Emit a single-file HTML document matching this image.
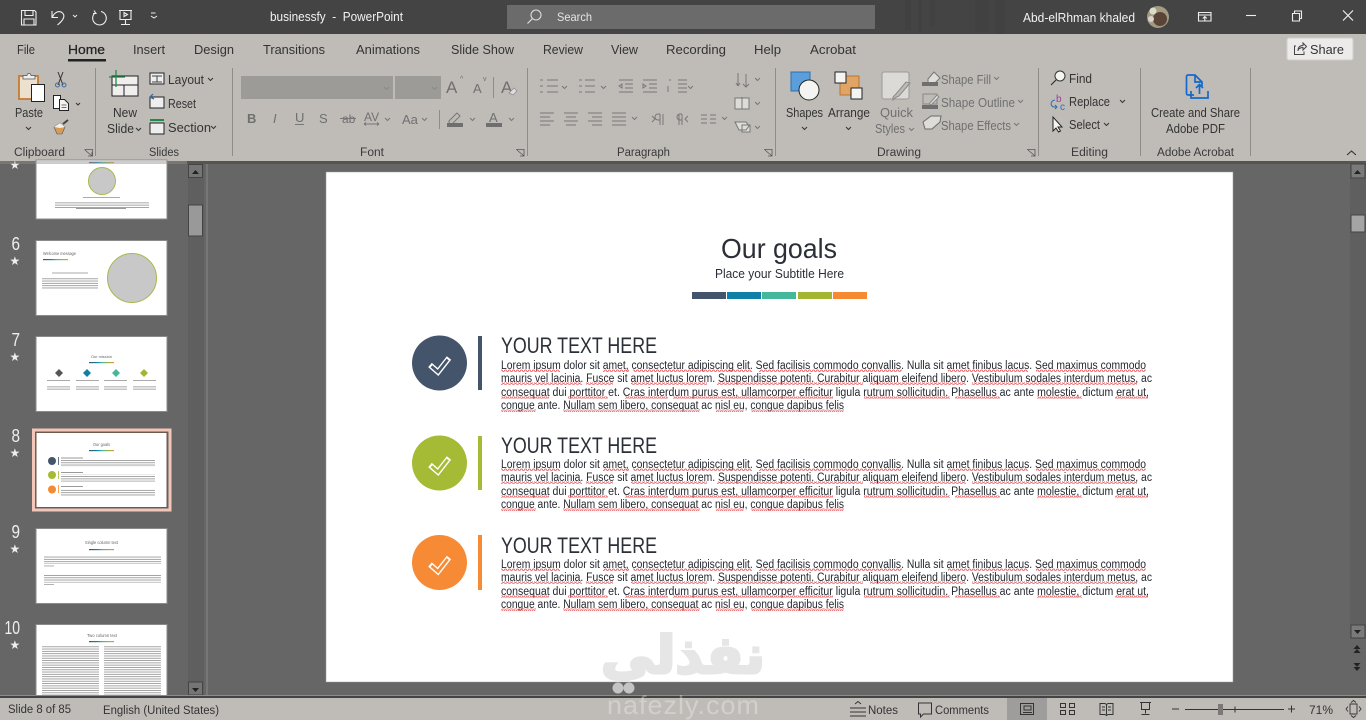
<!DOCTYPE html>
<html><head><meta charset="utf-8"><title>businessfy - PowerPoint</title>
<style>
html,body{margin:0;padding:0;width:1366px;height:720px;overflow:hidden;background:#666}
svg{display:block}
text{font-family:"Liberation Sans",sans-serif}
.t{fill:#333;font-size:12.5px}
.d{fill:#707070;font-size:12.5px}
.g{fill:#3a3a3a;font-size:11.5px}
.w{fill:#f2f2f2;font-size:12.5px}
.b{fill:#23282f;font-size:11.5px}
.h{fill:#2a2f38;font-size:22px}
.ic{fill:none;stroke:#333;stroke-width:1}
.id{fill:none;stroke:#777;stroke-width:1}
.th{fill:#fff;stroke:#8a8a8a;stroke-width:1}
.n{fill:#eee;font-size:18px}
.s{fill:#eee;font-size:12px;font-family:"DejaVu Sans",sans-serif}
</style></head><body>
<svg width="1366" height="720" viewBox="0 0 1366 720" xmlns="http://www.w3.org/2000/svg">
<defs>
<clipPath id="wm"><rect x="590" y="620" width="190" height="61"/></clipPath>
<pattern id="sq" width="4" height="2.4" patternUnits="userSpaceOnUse"><path d="M0 2L1 .5 2 .5 3 2 4 2" fill="none" stroke="#e0484c" stroke-width=".8"/></pattern>
<pattern id="ls" width="4" height="2.300" patternUnits="userSpaceOnUse"><rect width="4" height=".9" fill="#9c9c9c"/></pattern>
<linearGradient id="rb"><stop offset="0" stop-color="#44546a"/><stop offset=".3" stop-color="#0f7fa8"/><stop offset=".55" stop-color="#45b79a"/><stop offset=".8" stop-color="#a2b633"/><stop offset="1" stop-color="#f58a33"/></linearGradient>
<g id="sqg" fill="url(#sq)">
<rect x="501" y="0" width="59" height="2.4"/><rect x="603" y="0" width="26" height="2.4"/><rect x="633" y="0" width="119" height="2.4"/><rect x="759" y="0" width="143" height="2.4"/><rect x="948" y="0" width="80" height="2.4"/><rect x="1036" y="0" width="110" height="2.4"/>
<rect x="501" y="13" width="81" height="2.4"/><rect x="586" y="13" width="27" height="2.4"/><rect x="631" y="13" width="76" height="2.4"/><rect x="717" y="13" width="98" height="2.4"/><rect x="815" y="13" width="48" height="2.4"/><rect x="870" y="13" width="96" height="2.4"/><rect x="972" y="13" width="165" height="2.4"/>
<rect x="501" y="27" width="48" height="2.4"/><rect x="568" y="27" width="40" height="2.4"/><rect x="625" y="27" width="43" height="2.4"/><rect x="673" y="27" width="160" height="2.4"/><rect x="864" y="27" width="86" height="2.4"/><rect x="955" y="27" width="45" height="2.4"/><rect x="1037" y="27" width="45" height="2.4"/><rect x="1115" y="27" width="33" height="2.4"/>
<rect x="501" y="40" width="35" height="2.4"/><rect x="563" y="40" width="90" height="2.4"/><rect x="652" y="40" width="48" height="2.4"/><rect x="716" y="40" width="28" height="2.4"/><rect x="751" y="40" width="93" height="2.4"/>
</g>
</defs>

<!-- title bar -->
<rect width="1366" height="34" fill="#444"/>
<g fill="#414141"><rect x="905" y="0" width="6" height="30"/><rect x="918" y="0" width="4" height="32"/><rect x="930" y="0" width="5" height="26"/><rect x="975" y="0" width="14" height="32"/><rect x="995" y="0" width="10" height="34"/></g>
<g fill="none" stroke="#eee" stroke-width="1.1">
<path d="M21.5 10.5h13l1.500 1.500v13h-14.500zM25 10.500v5h8v-5M24 25v-6h10v6"/>
<path d="M52 11v6.500h6M52.500 17c2-5 7-7 10-4 3 3 1 7-5 12"/>
<path d="M73 15l2 2 2-2" stroke-width=".9"/>
<path d="M101 11.500a6.800 6.800 0 1 1-6 1.500M94 10.500l2 3h-3"/>
<path d="M119 10.500h13M120 10.500v9h11v-9M125.500 19.500v4.500M121 24.500h9M124 12.500l3.500 2-3.500 2z"/>
<path d="M151 13h4.500M151 16l3 2 3-2" stroke-width="1"/>
</g>
<text x="270" y="21" class="w" textLength="133" lengthAdjust="spacingAndGlyphs" xml:space="preserve">businessfy  -  PowerPoint</text>
<rect x="507" y="5" width="368" height="24" fill="#6b6b6b"/>
<circle cx="536" cy="15" r="5" fill="none" stroke="#ddd" stroke-width="1.1"/><path d="M532 19l-4.500 4.500" stroke="#ddd" stroke-width="1.200"/>
<text x="557" y="21" fill="#e5e5e5" font-size="12" textLength="35" lengthAdjust="spacingAndGlyphs">Search</text>
<text x="1023" y="22" class="w" textLength="112" lengthAdjust="spacingAndGlyphs">Abd-elRhman khaled</text>
<circle cx="1158" cy="17" r="11" fill="#a29a82"/><circle cx="1160" cy="19" r="7" fill="#5a4436"/><circle cx="1153" cy="11" r="3.500" fill="#d9dcc8"/><circle cx="1151" cy="19" r="3" fill="#d8d4cc"/>
<g fill="none" stroke="#eee" stroke-width="1.100">
<path d="M1198.500 12.500h12.500v8.500h-12.500zM1198.500 15h12.500M1204.800 21v-4.500M1202.800 18.500l2-2 2 2"/>
<path d="M1246 15.500h10"/>
<path d="M1292.500 13.500h7v7.500h-7zM1294.500 13v-2h7v7.500h-2"/>
<path d="M1343 10.500l10 10M1353 10.500l-10 10" stroke-width="1.200"/>
</g>

<!-- ribbon -->
<rect y="34" width="1366" height="127" fill="#bfbcb8"/>
<rect y="161" width="1366" height="3" fill="#555"/>
<g>
<text x="17" y="54" class="t" textLength="18" lengthAdjust="spacingAndGlyphs">File</text>
<text x="68" y="54" class="t" textLength="37" lengthAdjust="spacingAndGlyphs" style="fill:#222;stroke:#222;stroke-width:.25">Home</text>
<text x="133" y="54" class="t" textLength="32" lengthAdjust="spacingAndGlyphs">Insert</text>
<text x="194" y="54" class="t" textLength="40" lengthAdjust="spacingAndGlyphs">Design</text>
<text x="263" y="54" class="t" textLength="62" lengthAdjust="spacingAndGlyphs">Transitions</text>
<text x="356" y="54" class="t" textLength="64" lengthAdjust="spacingAndGlyphs">Animations</text>
<text x="451" y="54" class="t" textLength="63" lengthAdjust="spacingAndGlyphs">Slide Show</text>
<text x="543" y="54" class="t" textLength="40" lengthAdjust="spacingAndGlyphs">Review</text>
<text x="611" y="54" class="t" textLength="27" lengthAdjust="spacingAndGlyphs">View</text>
<text x="666" y="54" class="t" textLength="60" lengthAdjust="spacingAndGlyphs">Recording</text>
<text x="754" y="54" class="t" textLength="27" lengthAdjust="spacingAndGlyphs">Help</text>
<text x="810" y="54" class="t" textLength="46" lengthAdjust="spacingAndGlyphs">Acrobat</text>
</g>
<rect x="68" y="59" width="38" height="2.500" fill="#222"/>
<rect x="1287" y="38" width="66" height="22" rx="2" fill="#ecebea" stroke="#d0cecb"/>
<path d="M1296 46h-1.500v8.500h9.500v-3M1298 51c0-4 2-5.500 5-5.500v-2.500l3.500 3.500-3.500 3.500v-2.500c-2 0-3.500 .5-5 2.500z" fill="none" stroke="#444"/>
<text x="1310" y="54" class="t" textLength="34" lengthAdjust="spacingAndGlyphs">Share</text>
<path d="M1347 155l4.500-4 4.500 4" fill="none" stroke="#333" stroke-width="1.100"/>

<!-- separators -->
<g fill="#8e8c89"><rect x="95" y="68" width="1" height="88"/><rect x="232" y="68" width="1" height="88"/><rect x="527" y="68" width="1" height="88"/><rect x="775" y="68" width="1" height="88"/><rect x="1038" y="68" width="1" height="88"/><rect x="1140" y="68" width="1" height="88"/><rect x="1250" y="68" width="1" height="88"/></g>

<!-- clipboard -->
<rect x="19" y="76" width="19" height="23" fill="#ece0cf" stroke="#c67b32" stroke-width="1.800"/><path d="M23 79v-3.500h4a2 2 0 0 1 4 0h4v3.500z" fill="#eee" stroke="#555" stroke-width=".8"/>
<rect x="31.500" y="84.500" width="13" height="17" fill="#fff" stroke="#222"/>
<text x="15" y="117" class="t" textLength="28" lengthAdjust="spacingAndGlyphs">Paste</text>
<path d="M26 127l2.500 2.500 2.500-2.500" class="ic"/>
<path d="M58 72l5 13M63 72l-5 13" fill="none" stroke="#333"/><circle cx="57.500" cy="85" r="2" fill="none" stroke="#3a6ea8"/><circle cx="64" cy="85" r="2" fill="none" stroke="#3a6ea8"/>
<rect x="53.500" y="95.500" width="7" height="13" fill="#fff" stroke="#222"/><path d="M59.500 99.500h5l4 4v7h-9z" fill="#f4f3f1" stroke="#222"/><path d="M61.500 105h5M61.500 107.500h5" stroke="#444" stroke-width=".7"/><path d="M76 103l2 2 2-2" class="ic"/>
<path d="M54 127l6-4 5 4-3 7h-5z" fill="#d99a55" stroke="#555" stroke-width=".6"/><path d="M54 127l6-4 5 4-5 1z" fill="#f2f0ec"/><path d="M63 124l5-4" stroke="#444" stroke-width="2"/>
<text x="14" y="156" class="g" textLength="51" lengthAdjust="spacingAndGlyphs">Clipboard</text>
<path d="M84.500 149.500h8v7M85 150l7 6M92 152v4h-4" fill="none" stroke="#555" stroke-width=".8"/>

<!-- slides -->
<rect x="112" y="76" width="26" height="20" fill="#f0efed" stroke="#222"/><path d="M112 85h26M124 85v11" stroke="#222"/>
<path d="M116 70v17M109 77h16" stroke="#1f8a4c" stroke-width="1.300"/>
<text x="113" y="117" class="t" textLength="24" lengthAdjust="spacingAndGlyphs">New</text>
<text x="107" y="133" class="t" textLength="27" lengthAdjust="spacingAndGlyphs">Slide</text>
<path d="M136 128l2.500 2.500 2.500-2.500" class="ic"/>
<rect x="150" y="73" width="14" height="11" fill="#eee" stroke="#222"/><path d="M152 76h10M157 76v6M152 82h10" stroke="#444" fill="none"/>
<text x="168" y="84" class="t" textLength="36" lengthAdjust="spacingAndGlyphs">Layout</text><path d="M208 78l2.500 2.500 2.500-2.500" class="ic"/>
<rect x="150" y="97" width="14" height="11" fill="#eee" stroke="#222"/><path d="M150 97l3-3M150 97l4 2" stroke="#3a6ea8" stroke-width="1.300"/>
<text x="168" y="108" class="t" textLength="28" lengthAdjust="spacingAndGlyphs">Reset</text>
<rect x="150" y="119" width="14" height="2" fill="#1f8a4c"/><rect x="150" y="123" width="14" height="11" fill="#eee" stroke="#222"/>
<text x="168" y="132" class="t" textLength="43" lengthAdjust="spacingAndGlyphs">Section</text><path d="M211 126l2.500 2.500 2.500-2.500" class="ic"/>
<text x="149" y="156" class="g" textLength="30" lengthAdjust="spacingAndGlyphs">Slides</text>

<!-- font -->
<rect x="241" y="76" width="152" height="23" fill="#9d9b98"/><rect x="395" y="76" width="46" height="23" fill="#9d9b98"/>
<path d="M384 87l2.500 2.500 2.500-2.500M432 87l2.500 2.500 2.500-2.500" fill="none" stroke="#8b8987"/>
<text x="446" y="93" class="d" style="font-size:17px">A</text><text x="460" y="81" class="d" style="font-size:7px">^</text>
<text x="473" y="93" class="d" style="font-size:13px">A</text><text x="483" y="81" class="d" style="font-size:7px">v</text>
<rect x="493" y="77" width="1" height="21" fill="#8e8c89"/>
<text x="501" y="93" class="d" style="font-size:17px">A</text><path d="M509 93l5-5 3 3-4 4z" fill="#ddd" stroke="#888" stroke-width=".7"/>
<text x="247" y="123" class="d" style="font-weight:700;font-size:13px">B</text>
<text x="273" y="123" class="d" style="font-style:italic;font-size:13px">I</text>
<text x="295" y="122" class="d" style="font-size:13px">U</text><rect x="295" y="124" width="9" height="1" fill="#777"/>
<text x="319" y="123" class="d" style="font-size:13px">S</text>
<text x="342" y="123" class="d" style="font-size:12px">ab</text><rect x="340" y="118" width="16" height="1" fill="#777"/>
<text x="364" y="121" class="d" style="font-size:12px">AV</text><path d="M364 124h15M364 124l2-1.500M364 124l2 1.500M379 124l-2-1.500M379 124l-2 1.500" class="id"/><path d="M385 118l2.500 2.500 2.500-2.500" class="id"/>
<text x="402" y="124" class="d" style="font-size:13px">Aa</text><path d="M422 118l2.500 2.500 2.500-2.500" class="id"/>
<rect x="439" y="110" width="1" height="19" fill="#8e8c89"/>
<path d="M449 121l8-8 3 3-8 8h-3z" class="id"/><rect x="447" y="123" width="16" height="4" fill="#6f6f6f"/><path d="M470 118l2.500 2.500 2.500-2.500" class="id"/>
<text x="489" y="122" class="d" style="font-size:13px">A</text><rect x="486" y="123" width="16" height="4" fill="#6f6f6f"/><path d="M509 118l2.500 2.500 2.500-2.500" class="id"/>
<text x="360" y="156" class="g" textLength="24" lengthAdjust="spacingAndGlyphs">Font</text>
<path d="M516 149.500h8v7M517 150l7 6M524 152v4h-4" fill="none" stroke="#555" stroke-width=".8"/>

<!-- paragraph -->
<g class="id">
<path d="M547 80h11M547 86h11M547 92h11M540 80h3M540 86h3M540 92h3"/><path d="M562 86l2.500 2.500 2.500-2.500"/>
<path d="M585 80h10M585 86h10M585 92h10M579 80h3M579 86h3M579 92h3"/><path d="M601 86l2.500 2.500 2.500-2.500"/>
<path d="M619 80h14M625 84h8M625 88h8M619 92h14M619 86l3-2v4z"/>
<path d="M643 80h14M649 84h8M649 88h8M643 92h14M646 86l-3-2v4z"/>
<path d="M669 80h2M668 86v6M678 80h9M678 84h9M678 88h9M678 92h9"/><path d="M688 86l2.500 2.500 2.500-2.500"/>
<path d="M738 73v13M738 86l-2-3M738 86l2-3M746 87h0M746 74v13M743 84l3 3 3-3"/><path d="M755 78l2.500 2.500 2.500-2.500"/>
<rect x="735" y="98" width="14" height="11" fill="#dedcd9"/><path d="M742 97v12"/><path d="M755 102l2.500 2.500 2.500-2.500"/>
<path d="M735 122h11l3 4-3 4h-7zM742 125h8v7h-8z" fill="#dedcd9"/><path d="M755 126l2.500 2.500 2.500-2.500"/>
<path d="M540 113h14M540 117h10M540 121h14M540 125h10"/>
<path d="M564 113h14M566 117h10M564 121h14M566 125h10"/>
<path d="M588 113h14M592 117h10M588 121h14M592 125h10"/>
<path d="M612 113h14M612 117h14M612 121h14M612 125h14"/><path d="M632 117l2.500 2.500 2.500-2.500"/>
<path d="M652 116l3 3-3 3M663 114v11M660 114v11M660 114h-2a2.500 2.500 0 0 0 0 6h2"/>
<path d="M679 114v11M682 114v11M682 114h-2a2.500 2.500 0 0 0 0 6h2M688 116l-3 3 3 3"/>
<path d="M701 115h6M701 119h6M701 123h6M710 115h6M710 119h6M710 123h6"/><path d="M722 117l2.500 2.500 2.500-2.500"/>
</g>
<text x="617" y="156" class="g" textLength="53" lengthAdjust="spacingAndGlyphs">Paragraph</text>
<path d="M764 149.500h8v7M765 150l7 6M772 152v4h-4" fill="none" stroke="#555" stroke-width=".8"/>

<!-- drawing -->
<rect x="791" y="72" width="19" height="19" fill="#5a9fdc" stroke="#2e6fae"/><circle cx="809" cy="90" r="10" fill="#f4f4f2" stroke="#222"/>
<text x="786" y="117" class="t" textLength="37" lengthAdjust="spacingAndGlyphs">Shapes</text><path d="M802 127l2.500 2.500 2.500-2.500" class="ic"/>
<rect x="840" y="76" width="19" height="19" fill="#e0a565" stroke="#b9752f"/><rect x="835" y="72" width="11" height="11" fill="#f4f4f2" stroke="#222"/><rect x="851" y="88" width="11" height="11" fill="#f4f4f2" stroke="#222"/>
<text x="828" y="117" class="t" textLength="42" lengthAdjust="spacingAndGlyphs">Arrange</text><path d="M846 127l2.500 2.500 2.500-2.500" class="ic"/>
<rect x="882" y="72" width="27" height="27" rx="2" fill="#dcdad7" stroke="#9b9997"/><path d="M893 100c2-3 4-3 6-4l11-13-4-1-10 12c-2 2-4 3-3 6z" fill="#bdbbb7" stroke="#8c8a88"/>
<text x="880" y="117" class="d" textLength="33" lengthAdjust="spacingAndGlyphs">Quick</text>
<text x="875" y="133" class="d" textLength="30" lengthAdjust="spacingAndGlyphs">Styles</text><path d="M909 128l2.500 2.500 2.500-2.500" class="id"/>
<path d="M928 79l6-7 6 6-5 5h-7z" fill="#e0deda" stroke="#777"/><rect x="922" y="82" width="16" height="4" fill="#6f6f6f"/>
<text x="941" y="84" class="d" textLength="50" lengthAdjust="spacingAndGlyphs">Shape Fill</text><path d="M994 77l2.500 2.500 2.500-2.500" class="id"/>
<rect x="923" y="94" width="14" height="10" fill="none" stroke="#888"/><path d="M929 104l8-9 2 2-8 8z" fill="#ddd" stroke="#888"/><rect x="922" y="105" width="16" height="4" fill="#6f6f6f"/>
<text x="941" y="107" class="d" textLength="74" lengthAdjust="spacingAndGlyphs">Shape Outline</text><path d="M1018 100l2.500 2.500 2.500-2.500" class="id"/>
<path d="M923 122l8-6h10l-1 6-8 7h-7z" fill="#dedcd9" stroke="#6a6a6a"/>
<text x="941" y="130" class="d" textLength="70" lengthAdjust="spacingAndGlyphs">Shape Effects</text><path d="M1014 123l2.500 2.500 2.500-2.500" class="id"/>
<text x="877" y="156" class="g" textLength="44" lengthAdjust="spacingAndGlyphs">Drawing</text>
<path d="M1027 149.500h8v7M1028 150l7 6M1035 152v4h-4" fill="none" stroke="#555" stroke-width=".8"/>

<!-- editing -->
<circle cx="1060" cy="76" r="5" fill="#f4f4f2" stroke="#333"/><path d="M1056 80l-5 5" stroke="#333" stroke-width="1.200"/>
<text x="1069" y="83" class="t" textLength="23" lengthAdjust="spacingAndGlyphs">Find</text>
<text x="1056" y="102" fill="#a03ca0" style="font-size:10px">b</text><text x="1060" y="110" fill="#2f6fb0" style="font-size:10px">c</text><path d="M1055 100c-5 1-5 6-1 7l3 0M1055 105l2 2-2 2" fill="none" stroke="#2f6fb0"/>
<text x="1069" y="106" class="t" textLength="41" lengthAdjust="spacingAndGlyphs">Replace</text><path d="M1120 100l2.500 2.500 2.500-2.500" class="ic"/>
<path d="M1053 117v14l3-3 2.500 4 2-1-2.500-4h4z" fill="#f4f4f2" stroke="#222"/>
<text x="1069" y="129" class="t" textLength="31" lengthAdjust="spacingAndGlyphs">Select</text><path d="M1104 123l2.500 2.500 2.500-2.500" class="ic"/>
<text x="1071" y="156" class="g" textLength="37" lengthAdjust="spacingAndGlyphs">Editing</text>

<!-- acrobat -->
<path d="M1194 95h-6a1.500 1.500 0 0 1-1.500-1.500v-17a1.500 1.500 0 0 1 1.500-1.500h7l7 7v4M1195 75v7h7M1191 91v7h17v-7M1199.500 94v-9M1196 88l3.500-3.500 3.500 3.500" fill="none" stroke="#1669c8" stroke-width="1.700"/>
<text x="1151" y="117" class="t" textLength="89" lengthAdjust="spacingAndGlyphs">Create and Share</text>
<text x="1166" y="133" class="t" textLength="59" lengthAdjust="spacingAndGlyphs">Adobe PDF</text>
<text x="1157" y="156" class="g" textLength="77" lengthAdjust="spacingAndGlyphs">Adobe Acrobat</text>

<!-- panels -->
<rect y="164" width="1366" height="532" fill="#666"/>
<rect x="188" y="164" width="16" height="532" fill="#5f5f5f"/>
<rect x="206" y="164" width="2" height="532" fill="#777"/>
<rect x="188.500" y="164.500" width="14" height="13" fill="#757575" stroke="#444"/><path d="M192 174l3.500-4 3.500 4z" fill="#222"/>
<rect x="188.500" y="205" width="14" height="31" fill="#999" stroke="#444"/>
<rect x="188.500" y="682" width="14" height="13" fill="#757575" stroke="#444"/><path d="M192 688l3.500 4 3.500-4z" fill="#222"/>

<!-- thumb 5 -->
<rect x="36" y="160" width="131" height="59" class="th"/>
<rect x="89" y="162" width="25" height="1.200" fill="url(#rb)"/>
<circle cx="102" cy="181" r="13.500" fill="#c8c8c8" stroke="#a8b84a"/>
<rect x="83" y="197" width="37" height="1" fill="#aaa"/>
<rect x="55" y="201.500" width="94" height="7" fill="url(#ls)"/><rect x="76" y="208" width="50" height="1" fill="#9c9c9c"/>
<!-- 6 -->
<rect x="36" y="240.500" width="131" height="75" class="th"/>
<text x="43" y="255" fill="#666" style="font-size:4.500px" textLength="33" lengthAdjust="spacingAndGlyphs">Welcome message</text>
<rect x="43" y="259" width="25" height="1.200" fill="url(#rb)"/>
<circle cx="132" cy="278" r="24.500" fill="#c8c8c8" stroke="#a8b84a"/>
<rect x="52" y="272.500" width="36" height="1" fill="#aaa"/>
<rect x="42" y="277" width="56" height="12" fill="url(#ls)"/>
<!-- 7 -->
<rect x="36" y="336.500" width="131" height="75" class="th"/>
<text x="91" y="358" fill="#666" style="font-size:4px" textLength="21" lengthAdjust="spacingAndGlyphs">Our mission</text>
<rect x="89" y="362" width="25" height="1.200" fill="url(#rb)"/>
<g transform="translate(0 373)"><path d="M59 -4l4 4-4 4-4-4z" fill="#555"/><path d="M87 -4l4 4-4 4-4-4z" fill="#0f7fa8"/><path d="M116 -4l4 4-4 4-4-4z" fill="#45b79a"/><path d="M144 -4l4 4-4 4-4-4z" fill="#a2b633"/></g>
<g fill="#aaa"><rect x="47" y="380" width="23" height="1"/><rect x="76" y="380" width="23" height="1"/><rect x="104" y="380" width="23" height="1"/><rect x="133" y="380" width="23" height="1"/></g>
<g fill="url(#ls)"><rect x="47" y="385" width="23" height="6"/><rect x="76" y="385" width="23" height="6"/><rect x="104" y="385" width="23" height="6"/><rect x="133" y="385" width="23" height="6"/></g>
<!-- 8 -->
<rect x="33.500" y="430" width="136.500" height="80" fill="none" stroke="#f3c6b8" stroke-width="3"/>
<rect x="36" y="432.500" width="131" height="75" fill="#fff" stroke="#6d5a4c"/>
<text x="93" y="446" fill="#666" style="font-size:4.500px" textLength="17" lengthAdjust="spacingAndGlyphs">Our goals</text>
<rect x="89" y="450" width="25" height="1.200" fill="url(#rb)"/>
<circle cx="52" cy="461" r="4" fill="#44546a"/><circle cx="52" cy="475" r="4" fill="#a5bb35"/><circle cx="52" cy="489.500" r="4" fill="#f58a34"/>
<rect x="58" y="457" width=".8" height="8" fill="#44546a"/><rect x="58" y="471" width=".8" height="8" fill="#a5bb35"/><rect x="58" y="485" width=".8" height="8" fill="#f58a34"/>
<g fill="#999"><rect x="61" y="457.500" width="22" height="1"/><rect x="61" y="472" width="22" height="1"/><rect x="61" y="486" width="22" height="1"/></g>
<g fill="url(#ls)"><rect x="61" y="460" width="94" height="7"/><rect x="61" y="474.500" width="94" height="7"/><rect x="61" y="488.500" width="94" height="7"/></g>
<!-- 9 -->
<rect x="36" y="528.500" width="131" height="75" class="th"/>
<text x="85" y="544" fill="#666" style="font-size:4.500px" textLength="33" lengthAdjust="spacingAndGlyphs">Single column text</text>
<rect x="89" y="549" width="25" height="1.200" fill="url(#rb)"/>
<g fill="url(#ls)"><rect x="44" y="555.500" width="117" height="8.500"/><rect x="44" y="574" width="117" height="8.500"/></g>
<g fill="#aaa"><rect x="44" y="565.500" width="10" height=".9"/><rect x="44" y="584" width="10" height=".9"/></g>
<!-- 10 -->
<rect x="36" y="624.500" width="131" height="74" class="th"/>
<text x="87" y="637" fill="#666" style="font-size:4.500px" textLength="30" lengthAdjust="spacingAndGlyphs">Two column text</text>
<rect x="89" y="641" width="25" height="1.200" fill="url(#rb)"/>
<rect x="42" y="645" width="57" height="50" fill="url(#ls)"/><rect x="104" y="645" width="57" height="50" fill="url(#ls)"/>
<!-- numbers -->
<text x="11.500" y="250" class="n" textLength="8.500" lengthAdjust="spacingAndGlyphs">6</text><text x="11.500" y="346" class="n" textLength="8.500" lengthAdjust="spacingAndGlyphs">7</text><text x="11.500" y="442" class="n" textLength="8.500" lengthAdjust="spacingAndGlyphs">8</text><text x="11.500" y="538" class="n" textLength="8.500" lengthAdjust="spacingAndGlyphs">9</text><text x="4.500" y="634" class="n" textLength="15.500" lengthAdjust="spacingAndGlyphs">10</text>
<text x="9.500" y="169" class="s">★</text><text x="9.500" y="265" class="s">★</text><text x="9.500" y="361" class="s">★</text><text x="9.500" y="457" class="s">★</text><text x="9.500" y="553" class="s">★</text><text x="9.500" y="649" class="s">★</text>
<rect y="161" width="187" height="3" fill="#9c9a98" opacity=".5"/>

<!-- right scrollbar -->
<rect x="1350" y="164" width="16" height="532" fill="#5f5f5f"/>
<rect x="1351" y="164" width="14" height="14" fill="#7a7a7a" stroke="#444"/><path d="M1354 174l3.500-4 3.500 4z" fill="#222"/>
<rect x="1351" y="215" width="14" height="17" fill="#a5a5a5" stroke="#444"/>
<rect x="1351" y="625" width="14" height="13" fill="#7a7a7a" stroke="#444"/><path d="M1354 630l3.500 4 3.500-4z" fill="#222"/>
<rect x="1350" y="639" width="16" height="57" fill="#666"/>
<path d="M1353.500 649l3.500-4 3.500 4zM1353.500 653l3.500-4 3.500 4zM1353.500 663l3.500 4 3.500-4zM1353.500 667l3.500 4 3.500-4z" fill="#222"/>

<!-- slide -->
<rect x="326" y="172" width="907" height="510" fill="#fff" stroke="#999" stroke-width=".5"/>
<text x="721" y="258" fill="#2a2f38" style="font-size:28px" textLength="116" lengthAdjust="spacingAndGlyphs">Our goals</text>
<text x="715" y="278" fill="#2a2f38" style="font-size:13px" textLength="129" lengthAdjust="spacingAndGlyphs">Place your Subtitle Here</text>
<rect x="692" y="292" width="34" height="7" fill="#44546a"/><rect x="727" y="292" width="34" height="7" fill="#0f7fa8"/><rect x="762" y="292" width="34" height="7" fill="#45b79a"/><rect x="798" y="292" width="34" height="7" fill="#a2b633"/><rect x="833" y="292" width="34" height="7" fill="#f58a33"/>

<circle cx="439.500" cy="363" r="27.500" fill="#44546a"/><rect x="478" y="336" width="4" height="54" fill="#44546a"/>
<path d="M430 365l8 7 11-14" fill="none" stroke="#fff" stroke-width="5.500"/><path d="M431.500 366.300l6.500 5.700 9.700-12.500" fill="none" stroke="#44546a" stroke-width="2.800"/>
<circle cx="439.500" cy="463" r="27.500" fill="#a5bb35"/><rect x="478" y="436" width="4" height="54" fill="#a5bb35"/>
<path d="M430 465l8 7 11-14" fill="none" stroke="#fff" stroke-width="5.500"/><path d="M431.500 466.300l6.500 5.700 9.700-12.500" fill="none" stroke="#a5bb35" stroke-width="2.800"/>
<circle cx="439.500" cy="562.500" r="27.500" fill="#f78a35"/><rect x="478" y="535" width="4" height="55" fill="#f78a35"/>
<path d="M430 564.500l8 7 11-14" fill="none" stroke="#fff" stroke-width="5.500"/><path d="M431.500 565.800l6.500 5.700 9.700-12.500" fill="none" stroke="#f78a35" stroke-width="2.800"/>

<text x="501" y="353" class="h" textLength="156" lengthAdjust="spacingAndGlyphs">YOUR TEXT HERE</text>
<text x="501" y="369" class="b" textLength="645" lengthAdjust="spacingAndGlyphs">Lorem ipsum dolor sit amet, consectetur adipiscing elit. Sed facilisis commodo convallis. Nulla sit amet finibus lacus. Sed maximus commodo</text>
<text x="501" y="382" class="b" textLength="651" lengthAdjust="spacingAndGlyphs">mauris vel lacinia. Fusce sit amet luctus lorem. Suspendisse potenti. Curabitur aliquam eleifend libero. Vestibulum sodales interdum metus, ac</text>
<text x="501" y="396" class="b" textLength="648" lengthAdjust="spacingAndGlyphs">consequat dui porttitor et. Cras interdum purus est, ullamcorper efficitur ligula rutrum sollicitudin. Phasellus ac ante molestie, dictum erat ut,</text>
<text x="501" y="409" class="b" textLength="343" lengthAdjust="spacingAndGlyphs">congue ante. Nullam sem libero, consequat ac nisl eu, congue dapibus felis</text>
<use href="#sqg" y="369.500"/>

<text x="501" y="453" class="h" textLength="156" lengthAdjust="spacingAndGlyphs">YOUR TEXT HERE</text>
<text x="501" y="468" class="b" textLength="645" lengthAdjust="spacingAndGlyphs">Lorem ipsum dolor sit amet, consectetur adipiscing elit. Sed facilisis commodo convallis. Nulla sit amet finibus lacus. Sed maximus commodo</text>
<text x="501" y="481" class="b" textLength="651" lengthAdjust="spacingAndGlyphs">mauris vel lacinia. Fusce sit amet luctus lorem. Suspendisse potenti. Curabitur aliquam eleifend libero. Vestibulum sodales interdum metus, ac</text>
<text x="501" y="495" class="b" textLength="648" lengthAdjust="spacingAndGlyphs">consequat dui porttitor et. Cras interdum purus est, ullamcorper efficitur ligula rutrum sollicitudin. Phasellus ac ante molestie, dictum erat ut,</text>
<text x="501" y="508" class="b" textLength="343" lengthAdjust="spacingAndGlyphs">congue ante. Nullam sem libero, consequat ac nisl eu, congue dapibus felis</text>
<use href="#sqg" y="468.500"/>

<text x="501" y="553" class="h" textLength="156" lengthAdjust="spacingAndGlyphs">YOUR TEXT HERE</text>
<text x="501" y="568" class="b" textLength="645" lengthAdjust="spacingAndGlyphs">Lorem ipsum dolor sit amet, consectetur adipiscing elit. Sed facilisis commodo convallis. Nulla sit amet finibus lacus. Sed maximus commodo</text>
<text x="501" y="581" class="b" textLength="651" lengthAdjust="spacingAndGlyphs">mauris vel lacinia. Fusce sit amet luctus lorem. Suspendisse potenti. Curabitur aliquam eleifend libero. Vestibulum sodales interdum metus, ac</text>
<text x="501" y="595" class="b" textLength="648" lengthAdjust="spacingAndGlyphs">consequat dui porttitor et. Cras interdum purus est, ullamcorper efficitur ligula rutrum sollicitudin. Phasellus ac ante molestie, dictum erat ut,</text>
<text x="501" y="608" class="b" textLength="343" lengthAdjust="spacingAndGlyphs">congue ante. Nullam sem libero, consequat ac nisl eu, congue dapibus felis</text>
<use href="#sqg" y="568.500"/>

<!-- status bar -->
<rect y="695" width="1366" height="1" fill="#8c8c8c"/><rect y="696" width="1366" height="2" fill="#444"/>
<rect y="698" width="1366" height="22" fill="#bfbcb8"/>
<text x="8" y="713" class="t" style="font-size:11.500px" textLength="63" lengthAdjust="spacingAndGlyphs">Slide 8 of 85</text>
<text x="103" y="714" class="t" style="font-size:11.500px" textLength="116" lengthAdjust="spacingAndGlyphs">English (United States)</text>
<path d="M850 708h16M850 712h16M850 716h16M855 704l3-2.500 3 2.500" fill="none" stroke="#333"/>
<text x="868" y="714" class="t" style="font-size:11.500px" textLength="30" lengthAdjust="spacingAndGlyphs">Notes</text>
<path d="M918.500 703h13v11h-8l-3 3v-3h-2z" fill="none" stroke="#333"/>
<text x="935" y="714" class="t" style="font-size:11.500px" textLength="54" lengthAdjust="spacingAndGlyphs">Comments</text>
<rect x="1007" y="698" width="40" height="22" fill="#9f9d9b"/>
<path d="M1020.500 703.500h13v11h-13zM1024 706h7v4h-7zM1023 712.500h9" fill="none" stroke="#333"/>
<path d="M1060.500 703.500h5v4h-5zM1069.500 703.500h5v4h-5zM1060.500 710.500h5v4h-5zM1069.500 710.500h5v4h-5z" fill="none" stroke="#333"/>
<path d="M1100 703.500h5l1.500 1 1.500-1h5v11h-5l-1.500 1-1.500-1h-5zM1106.500 704.500v10M1102 707h3M1102 710h3M1108 707h3M1108 710h3" fill="none" stroke="#333"/>
<path d="M1140 702.500h11M1141.500 702.500v7h8v-7M1145.500 709.500v4M1141.500 714.500h8" fill="none" stroke="#333"/>
<path d="M1172 709h7M1185 709.500h99M1235 706.500v6M1288 709h7M1291.500 705.500v7" fill="none" stroke="#333"/>
<rect x="1218" y="704" width="5" height="11" fill="#7b7977"/>
<text x="1309" y="714" class="t" style="font-size:11.500px" textLength="24" lengthAdjust="spacingAndGlyphs">71%</text>
<path d="M1350 704h7v10h-7zM1348 706.500l-2 2.500 2 2.500M1359 706.500l2 2.500-2 2.500M1351 702.500l2.500-2 2.500 2M1351 715.500l2.500 2 2.500-2" fill="none" stroke="#333" stroke-width=".9"/>

<!-- watermark -->
<g clip-path="url(#wm)"><text x="601" y="673" direction="rtl" text-anchor="end" fill="#e6e6e6" stroke="#e6e6e6" stroke-width="3" style="font-family:'DejaVu Sans',sans-serif;font-size:52px;font-weight:700" textLength="164" lengthAdjust="spacingAndGlyphs">نفذلي</text></g>
<circle cx="618" cy="688" r="5.500" fill="#c4c4c4"/><circle cx="629" cy="688" r="5.500" fill="#c4c4c4"/>
<text x="607" y="714" fill="#fff" fill-opacity=".3" style="font-size:26px;letter-spacing:1px" textLength="153" lengthAdjust="spacingAndGlyphs">nafezly.com</text>
</svg>
</body></html>
